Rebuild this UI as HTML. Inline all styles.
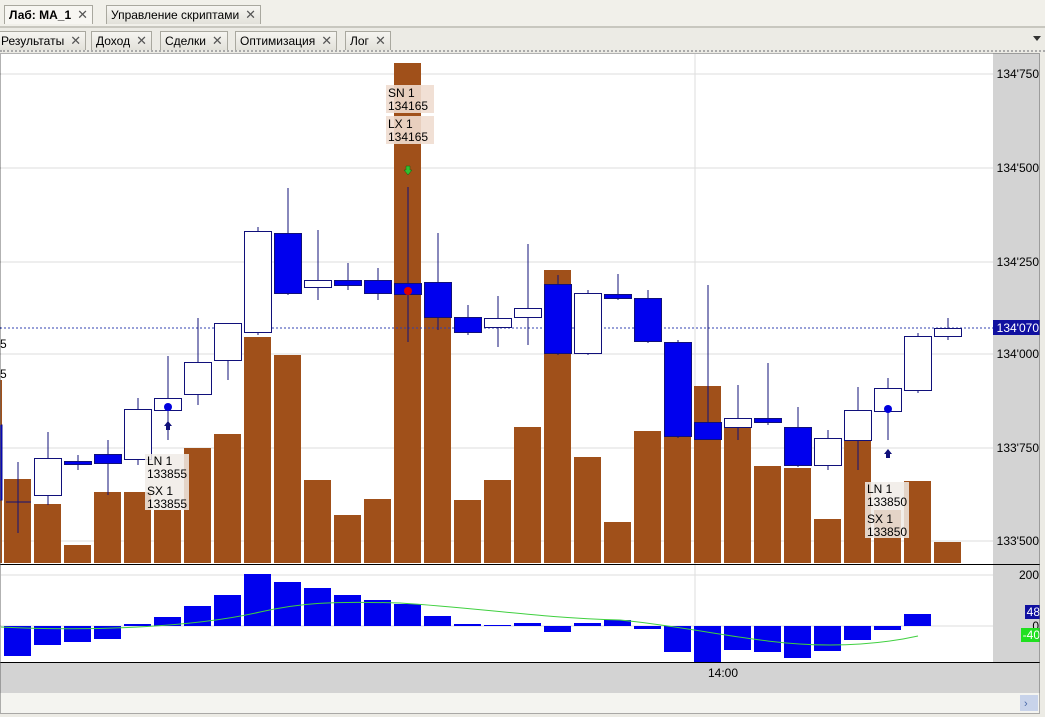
<!DOCTYPE html>
<html><head><meta charset="utf-8"><style>
body{margin:0;width:1045px;height:717px;overflow:hidden;background:#ecebe5;font-family:"Liberation Sans",sans-serif;}
.tab{position:absolute;font-size:12px;color:#000;background:linear-gradient(#f6f5f1,#e2e1da);border:1px solid #a9a89f;border-bottom:none;height:18px;line-height:18px;padding:0 4px;}
.x{color:#555;font-size:13px;margin-left:6px}
</style></head><body>
<div style="position:absolute;left:0;top:0;width:1045px;height:26px;background:#f1f0ea;border-bottom:2px solid #c8c7bf"></div>
<div class="tab" style="left:4px;top:5px;font-weight:bold;background:#f7f6f2">Лаб: MA_1<span class="x" style="font-weight:normal">✕</span></div>
<div class="tab" style="left:106px;top:5px;">Управление скриптами<span class="x">✕</span></div>
<div style="position:absolute;left:0;top:28px;width:1045px;height:22px;background:#ecebe5;border-bottom:2px dotted #aaa"></div>
<div class="tab" style="left:-4px;top:31px;">Результаты<span class="x">✕</span></div>
<div class="tab" style="left:91px;top:31px;">Доход<span class="x">✕</span></div>
<div class="tab" style="left:160px;top:31px;">Сделки<span class="x">✕</span></div>
<div class="tab" style="left:235px;top:31px;">Оптимизация<span class="x">✕</span></div>
<div class="tab" style="left:345px;top:31px;">Лог<span class="x">✕</span></div>
<div style="position:absolute;left:1033px;top:36px;width:0;height:0;border-left:4px solid transparent;border-right:4px solid transparent;border-top:5px solid #333"></div>
<svg style="position:absolute;left:0;top:0" width="1045" height="717" font-family="Liberation Sans, sans-serif">
<rect x="0" y="53" width="993" height="610" fill="#fff"/>
<rect x="993" y="53" width="47" height="610" fill="#d3d3d3"/>
<rect x="0" y="663" width="1040" height="30" fill="#d3d3d3"/>
<rect x="0" y="693" width="1040" height="20" fill="#f4f4f0"/>
<rect x="1020" y="695" width="18" height="16" fill="#c8d3ea"/>
<text x="1024" y="707" font-size="11" fill="#4a6aa8">›</text>
<g stroke="#ddd" stroke-width="1">
<line x1="0" y1="74" x2="993" y2="74"/><line x1="0" y1="168" x2="993" y2="168"/><line x1="0" y1="262" x2="993" y2="262"/><line x1="0" y1="354" x2="993" y2="354"/><line x1="0" y1="448" x2="993" y2="448"/><line x1="0" y1="541" x2="993" y2="541"/><line x1="695" y1="53" x2="695" y2="663"/>
<line x1="0" y1="575" x2="993" y2="575"/><line x1="0" y1="626" x2="993" y2="626"/>
</g>
<g fill="#a0501a">
<rect x="0" y="380" width="2" height="183"/>
<rect x="4" y="479" width="27" height="84"/><rect x="34" y="504" width="27" height="59"/><rect x="64" y="545" width="27" height="18"/><rect x="94" y="492" width="27" height="71"/><rect x="124" y="492" width="27" height="71"/><rect x="154" y="510" width="27" height="53"/><rect x="184" y="448" width="27" height="115"/><rect x="214" y="434" width="27" height="129"/><rect x="244" y="337" width="27" height="226"/><rect x="274" y="355" width="27" height="208"/><rect x="304" y="480" width="27" height="83"/><rect x="334" y="515" width="27" height="48"/><rect x="364" y="499" width="27" height="64"/><rect x="394" y="63" width="27" height="500"/><rect x="424" y="318" width="27" height="245"/><rect x="454" y="500" width="27" height="63"/><rect x="484" y="480" width="27" height="83"/><rect x="514" y="427" width="27" height="136"/><rect x="544" y="270" width="27" height="293"/><rect x="574" y="457" width="27" height="106"/><rect x="604" y="522" width="27" height="41"/><rect x="634" y="431" width="27" height="132"/><rect x="664" y="436" width="27" height="127"/><rect x="694" y="386" width="27" height="177"/><rect x="724" y="423" width="27" height="140"/><rect x="754" y="466" width="27" height="97"/><rect x="784" y="468" width="27" height="95"/><rect x="814" y="519" width="27" height="44"/><rect x="844" y="420" width="27" height="143"/><rect x="874" y="510" width="27" height="53"/><rect x="904" y="481" width="27" height="82"/><rect x="934" y="542" width="27" height="21"/>
</g>
<line x1="0" y1="328" x2="993" y2="328" stroke="#3040b0" stroke-dasharray="2,2"/>
<g stroke="#10107a" stroke-width="1">
<line x1="18" y1="462" x2="18" y2="533"/><line x1="6" y1="502" x2="31" y2="502"/>
<line x1="48" y1="432" x2="48" y2="505"/><line x1="78" y1="455" x2="78" y2="470"/><line x1="108" y1="440" x2="108" y2="495"/><line x1="138" y1="398" x2="138" y2="465"/><line x1="168" y1="356" x2="168" y2="440"/><line x1="198" y1="318" x2="198" y2="405"/><line x1="228" y1="323" x2="228" y2="380"/><line x1="258" y1="227" x2="258" y2="335"/><line x1="288" y1="188" x2="288" y2="295"/><line x1="318" y1="230" x2="318" y2="300"/><line x1="348" y1="263" x2="348" y2="290"/><line x1="378" y1="268" x2="378" y2="300"/><line x1="408" y1="187" x2="408" y2="342"/><line x1="438" y1="233" x2="438" y2="330"/><line x1="468" y1="305" x2="468" y2="335"/><line x1="498" y1="296" x2="498" y2="347"/><line x1="528" y1="244" x2="528" y2="345"/><line x1="558" y1="275" x2="558" y2="355"/><line x1="588" y1="290" x2="588" y2="355"/><line x1="618" y1="274" x2="618" y2="300"/><line x1="648" y1="290" x2="648" y2="343"/><line x1="678" y1="340" x2="678" y2="438"/><line x1="708" y1="285" x2="708" y2="440"/><line x1="738" y1="385" x2="738" y2="440"/><line x1="768" y1="363" x2="768" y2="425"/><line x1="798" y1="407" x2="798" y2="467"/><line x1="828" y1="430" x2="828" y2="470"/><line x1="858" y1="387" x2="858" y2="470"/><line x1="888" y1="378" x2="888" y2="440"/><line x1="918" y1="333" x2="918" y2="393"/><line x1="948" y1="318" x2="948" y2="340"/>
</g>
<g stroke="#10107a" stroke-width="1">
<rect x="0" y="425" width="2" height="75" fill="#0000ee"/>
<rect x="34.5" y="458.5" width="27" height="37" fill="#fff"/>
<rect x="64.5" y="461.5" width="27" height="3" fill="#0000ee"/>
<rect x="94.5" y="454.5" width="27" height="9" fill="#0000ee"/>
<rect x="124.5" y="409.5" width="27" height="50" fill="#fff"/>
<rect x="154.5" y="398.5" width="27" height="12" fill="#fff"/>
<rect x="184.5" y="362.5" width="27" height="32" fill="#fff"/>
<rect x="214.5" y="323.5" width="27" height="37" fill="#fff"/>
<rect x="244.5" y="231.5" width="27" height="101" fill="#fff"/>
<rect x="274.5" y="233.5" width="27" height="60" fill="#0000ee"/>
<rect x="304.5" y="280.5" width="27" height="7" fill="#fff"/>
<rect x="334.5" y="280.5" width="27" height="5" fill="#0000ee"/>
<rect x="364.5" y="280.5" width="27" height="13" fill="#0000ee"/>
<rect x="394.5" y="283.5" width="27" height="11" fill="#0000ee"/>
<rect x="424.5" y="282.5" width="27" height="35" fill="#0000ee"/>
<rect x="454.5" y="317.5" width="27" height="15" fill="#0000ee"/>
<rect x="484.5" y="318.5" width="27" height="9" fill="#fff"/>
<rect x="514.5" y="308.5" width="27" height="9" fill="#fff"/>
<rect x="544.5" y="284.5" width="27" height="69" fill="#0000ee"/>
<rect x="574.5" y="293.5" width="27" height="60" fill="#fff"/>
<rect x="604.5" y="294.5" width="27" height="4" fill="#0000ee"/>
<rect x="634.5" y="298.5" width="27" height="43" fill="#0000ee"/>
<rect x="664.5" y="342.5" width="27" height="94" fill="#0000ee"/>
<rect x="694.5" y="422.5" width="27" height="17" fill="#0000ee"/>
<rect x="724.5" y="418.5" width="27" height="9" fill="#fff"/>
<rect x="754.5" y="418.5" width="27" height="4" fill="#0000ee"/>
<rect x="784.5" y="427.5" width="27" height="38" fill="#0000ee"/>
<rect x="814.5" y="438.5" width="27" height="27" fill="#fff"/>
<rect x="844.5" y="410.5" width="27" height="30" fill="#fff"/>
<rect x="874.5" y="388.5" width="27" height="23" fill="#fff"/>
<rect x="904.5" y="336.5" width="27" height="54" fill="#fff"/>
<rect x="934.5" y="328.5" width="27" height="8" fill="#fff"/>
</g>
<circle cx="168" cy="407" r="4" fill="#0000dd"/><circle cx="888" cy="409" r="4" fill="#0000dd"/><circle cx="408" cy="291" r="4" fill="#e00000"/>
<path d="M168 421 l-4 5 h2 v4 h4 v-4 h2 z" fill="#10107a"/>
<path d="M888 449 l-4 5 h2 v4 h4 v-4 h2 z" fill="#10107a"/>
<path d="M408 175 l-4 -5 h2 v-4 h4 v4 h2 z" fill="#30c030" stroke="#106010" stroke-width="0.5"/>
<g font-size="12" fill="#000">
<rect x="386" y="85" width="48" height="28" fill="#f0ddd0" opacity="0.9"/><rect x="386" y="116" width="48" height="28" fill="#f0ddd0" opacity="0.9"/>
<text x="388" y="97">SN 1</text><text x="388" y="110">134165</text><text x="388" y="128">LX 1</text><text x="388" y="141">134165</text>
<rect x="145" y="454" width="44" height="56" fill="#f0ebe6" opacity="0.85"/>
<text x="147" y="465">LN 1</text><text x="147" y="478">133855</text><text x="147" y="495">SX 1</text><text x="147" y="508">133855</text>
<rect x="865" y="482" width="44" height="56" fill="#f0ebe6" opacity="0.85"/>
<text x="867" y="493">LN 1</text><text x="867" y="506">133850</text><text x="867" y="523">SX 1</text><text x="867" y="536">133850</text>
<text x="0" y="348">5</text><text x="0" y="378">5</text>
</g>
<g font-size="12" fill="#000" text-anchor="end">
<text x="1039" y="78">134'750</text><text x="1039" y="172">134'500</text><text x="1039" y="266">134'250</text><text x="1039" y="358">134'000</text><text x="1039" y="452">133'750</text><text x="1039" y="545">133'500</text>
<rect x="993" y="320" width="47" height="15" fill="#1010a0"/><text x="1039" y="332" fill="#fff">134'070</text>
<text x="1039" y="579">200</text>
<rect x="1025" y="605" width="15" height="14" fill="#1010a0"/><text x="1040" y="616" fill="#fff">48</text>
<text x="1039" y="630">0</text>
<rect x="1021" y="628" width="19" height="14" fill="#20e020"/><text x="1040" y="639" fill="#fff">-40</text>
</g>
<text x="708" y="677" font-size="12">14:00</text>
<line x1="0" y1="564.5" x2="1040" y2="564.5" stroke="#000"/>
<line x1="0" y1="662.5" x2="1040" y2="662.5" stroke="#000"/>
<g fill="#0000ee">
<rect x="4" y="626" width="27" height="30"/><rect x="34" y="626" width="27" height="19"/><rect x="64" y="626" width="27" height="16"/><rect x="94" y="626" width="27" height="13"/><rect x="124" y="624" width="27" height="2"/><rect x="154" y="617" width="27" height="9"/><rect x="184" y="606" width="27" height="20"/><rect x="214" y="595" width="27" height="31"/><rect x="244" y="574" width="27" height="52"/><rect x="274" y="582" width="27" height="44"/><rect x="304" y="588" width="27" height="38"/><rect x="334" y="595" width="27" height="31"/><rect x="364" y="600" width="27" height="26"/><rect x="394" y="604" width="27" height="22"/><rect x="424" y="616" width="27" height="10"/><rect x="454" y="624" width="27" height="2"/><rect x="484" y="625" width="27" height="1"/><rect x="514" y="623" width="27" height="3"/><rect x="544" y="626" width="27" height="6"/><rect x="574" y="623" width="27" height="3"/><rect x="604" y="620" width="27" height="6"/><rect x="634" y="626" width="27" height="3"/><rect x="664" y="626" width="27" height="26"/><rect x="694" y="626" width="27" height="36"/><rect x="724" y="626" width="27" height="24"/><rect x="754" y="626" width="27" height="26"/><rect x="784" y="626" width="27" height="32"/><rect x="814" y="626" width="27" height="25"/><rect x="844" y="626" width="27" height="14"/><rect x="874" y="626" width="27" height="4"/><rect x="904" y="614" width="27" height="12"/>
</g>
<path d="M0 627 C100 632 200 626 260 612 C300 603 330 601 400 603 C480 608 540 618 620 620 C700 628 760 645 830 645 C870 645 900 640 918 636" fill="none" stroke="#40d040" stroke-width="1"/>
<rect x="0.5" y="53.5" width="1039" height="660" fill="none" stroke="#666" stroke-dasharray="1,1"/>
</svg>
</body></html>
